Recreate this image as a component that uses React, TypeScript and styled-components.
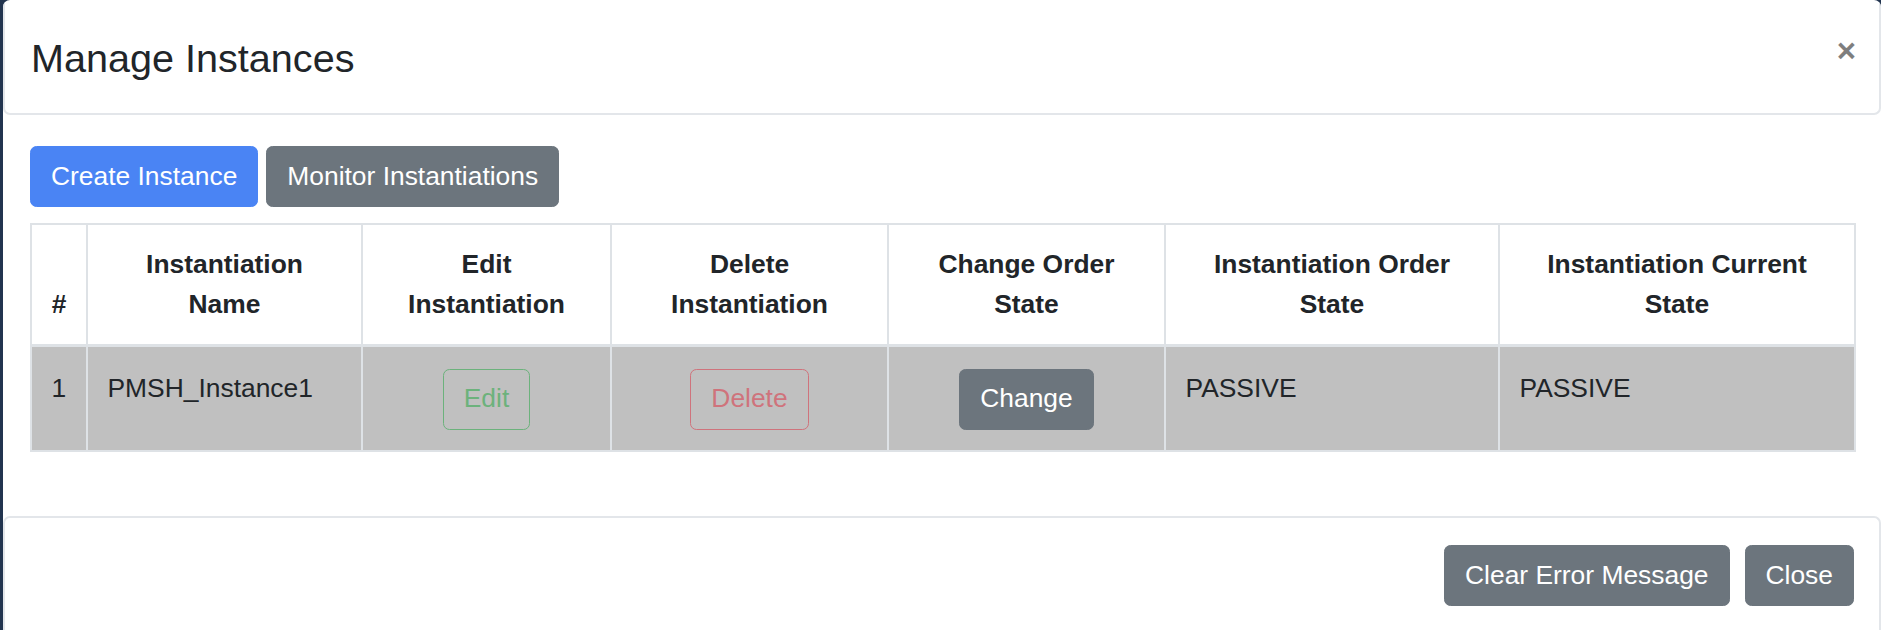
import React from "react";
import styled, { createGlobalStyle, css } from "styled-components";

const GlobalStyle = createGlobalStyle`
  html, body { margin: 0; padding: 0; }
  body {
    background: #22344f;
    font-family: "Liberation Sans", Arial, sans-serif;
    color: #212529;
    overflow: hidden;
  }
  * { box-sizing: border-box; }
`;

const Page = styled.div`
  display: flex;
  height: 630px;
  padding-left: 3px;
`;

const Modal = styled.div`
  flex: 1;
  display: flex;
  flex-direction: column;
  background: #fff;
  border-radius: 7px 7px 0 0;
  overflow: hidden;
`;

const Header = styled.header`
  display: flex;
  align-items: flex-start;
  justify-content: space-between;
  height: 115px;
  padding: 29px 23px 26px 26px;
  border: 2px solid #e3e6ea;
  border-top: none;
  border-radius: 0 0 7px 7px;
`;

const Title = styled.h4`
  margin: 0;
  font-size: 39.6px;
  line-height: 58px;
  font-weight: 400;
  color: #212529;
`;

const CloseX = styled.button`
  border: none;
  background: transparent;
  padding: 0;
  margin: 5px 0 0 0;
  font-family: inherit;
  font-size: 33px;
  font-weight: 700;
  line-height: 1;
  color: #000;
  opacity: 0.5;
  cursor: pointer;
`;

const Body = styled.main`
  padding: 31px 27px 64px 27px;
`;

const Toolbar = styled.div`
  display: flex;
  gap: 8px;
  margin-bottom: 16px;
`;

type Variant = "primary" | "secondary" | "success" | "danger";

const variants: Record<Variant, ReturnType<typeof css>> = {
  primary: css`
    background: #4a84f4;
    border-color: #4a84f4;
    color: #fff;
  `,
  secondary: css`
    background: #6c757d;
    border-color: #6c757d;
    color: #fff;
  `,
  success: css`
    background: transparent;
    border-color: #28a745;
    color: #28a745;
    opacity: 0.55;
  `,
  danger: css`
    background: transparent;
    border-color: #dc3545;
    color: #dc3545;
    opacity: 0.55;
  `,
};

const Button = styled.button<{ $variant: Variant }>`
  display: inline-block;
  font-family: inherit;
  font-size: 26.4px;
  line-height: 39.6px;
  font-weight: 400;
  padding: 9.9px 20px;
  border: 1.65px solid transparent;
  border-radius: 6.5px;
  white-space: nowrap;
  cursor: pointer;
  ${(p) => variants[p.$variant]}
`;

const Table = styled.table`
  width: 100%;
  table-layout: fixed;
  border-collapse: collapse;
  border: 2px solid #dee2e6;
  font-size: 26.4px;
  line-height: 39.6px;
`;

const Col = styled.col<{ $w: number }>`
  width: ${(p) => p.$w}px;
`;

const Th = styled.th`
  padding: 20px 19px 19px;
  font-weight: 700;
  text-align: center;
  vertical-align: bottom;
  white-space: pre-line;
  border: 2px solid #dee2e6;
  border-bottom-width: 3px;
  background: #fff;
`;

const Td = styled.td<{ $center?: boolean }>`
  padding: 22px 19.5px 20px;
  vertical-align: top;
  text-align: ${(p) => (p.$center ? "center" : "left")};
  background: #c0c0c0;
  border: 2px solid #dee2e6;
  color: #212529;
`;

const Footer = styled.footer`
  display: flex;
  justify-content: flex-end;
  gap: 15px;
  padding: 27px 25px 26px;
  border: 2px solid #e3e6ea;
  border-bottom: none;
  border-radius: 7px 7px 0 0;
  flex: 1;
`;

const columns: { label: string; w: number }[] = [
  { label: "#", w: 56 },
  { label: "Instantiation\nName", w: 275 },
  { label: "Edit Instantiation", w: 249 },
  { label: "Delete Instantiation", w: 277 },
  { label: "Change Order State", w: 277 },
  { label: "Instantiation Order State", w: 334 },
  { label: "Instantiation Current State", w: 356 },
];

export default function App() {
  return (
    <>
      <GlobalStyle />
      <Page>
        <Modal>
          <Header>
            <Title>Manage Instances</Title>
            <CloseX aria-label="Close">×</CloseX>
          </Header>
          <Body>
            <Toolbar>
              <Button $variant="primary">Create Instance</Button>
              <Button $variant="secondary">Monitor Instantiations</Button>
            </Toolbar>
            <Table>
              <colgroup>
                {columns.map((c) => (
                  <Col key={c.label} $w={c.w} />
                ))}
              </colgroup>
              <thead>
                <tr>
                  {columns.map((c) => (
                    <Th key={c.label}>{c.label}</Th>
                  ))}
                </tr>
              </thead>
              <tbody>
                <tr>
                  <Td>1</Td>
                  <Td>PMSH_Instance1</Td>
                  <Td $center>
                    <Button $variant="success" disabled>
                      Edit
                    </Button>
                  </Td>
                  <Td $center>
                    <Button $variant="danger" disabled>
                      Delete
                    </Button>
                  </Td>
                  <Td $center>
                    <Button $variant="secondary">Change</Button>
                  </Td>
                  <Td>PASSIVE</Td>
                  <Td>PASSIVE</Td>
                </tr>
              </tbody>
            </Table>
          </Body>
          <Footer>
            <Button $variant="secondary">Clear Error Message</Button>
            <Button $variant="secondary">Close</Button>
          </Footer>
        </Modal>
      </Page>
    </>
  );
}
